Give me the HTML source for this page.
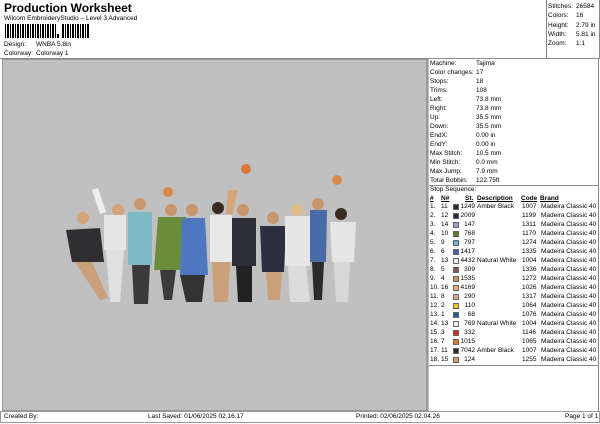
<!DOCTYPE html>
<html><head><meta charset="utf-8"><style>
*{margin:0;padding:0;box-sizing:border-box}
body{width:600px;height:424px;background:#fff;font-family:"Liberation Sans",Arial,sans-serif;font-size:6.5px;color:#000;position:relative;overflow:hidden}
.a{position:absolute;white-space:nowrap}
.t{line-height:9px}
.sw{position:absolute;width:6px;height:6px;border:1px solid #666}
</style></head><body>
<div class="a" style="left:4px;top:1px;font-size:12px;font-weight:bold">Production Worksheet</div>
<div class="a" style="left:4px;top:15px;font-size:6.5px">Wilcom EmbroideryStudio – Level 3 Advanced</div>
<div class="a" style="left:5px;top:24px;width:51px;height:14px;background:repeating-linear-gradient(90deg,#000 0 1px,#fff 1px 2px,#000 2px 4px,#fff 4px 5px)"></div>
<div class="a" style="left:57px;top:34px;width:2px;height:4px;background:#000"></div>
<div class="a" style="left:62px;top:24px;width:27px;height:14px;background:repeating-linear-gradient(90deg,#000 0 2px,#fff 2px 3px,#000 3px 4px,#fff 4px 5px)"></div>
<div class="a" style="left:4px;top:41px">Design:</div><div class="a" style="left:36px;top:41px">WNBA 5,8in</div>
<div class="a" style="left:4px;top:50px">Colorway:</div><div class="a" style="left:36px;top:50px">Colorway 1</div>

<div class="a" style="left:546px;top:0;width:54px;height:59px;border-left:1px solid #888;border-right:1px solid #888"></div>
<div class="a t" style="left:548px;top:2px;line-height:9.3px">Stitches:<br>Colors:<br>Height:<br>Width:<br>Zoom:</div>
<div class="a t" style="left:576px;top:2px;line-height:9.3px">26584<br>16<br>2.79 in<br>5.81 in<br>1:1</div>
<div class="a" style="left:0;top:58px;width:600px;height:1px;background:#888"></div>

<div class="a" style="left:2px;top:59px;width:425px;height:352px;background:#c0c0c0;border:1px solid #999"></div>
<svg class="a" style="left:0;top:0" width="600" height="424">
<g>
<circle cx="246" cy="169" r="5" fill="#d9773a"/>
<circle cx="168" cy="192" r="5" fill="#d98a4a"/>
<circle cx="337" cy="180" r="5" fill="#d9894a"/>
<circle cx="290" cy="249" r="5" fill="#d47a3a"/>
<circle cx="83" cy="218" r="6" fill="#d4a47a"/><path d="M66 230 L100 228 L104 262 L72 262Z" fill="#2e2e33"/><path d="M75 262 L92 262 L108 298 L100 300Z" fill="#caa07a"/>
<circle cx="118" cy="210" r="6" fill="#d4a47a"/><path d="M92 190 L98 188 L106 212 L100 214Z" fill="#eee"/><path d="M104 215 L126 215 L126 250 L104 250Z" fill="#e6e6e6"/><path d="M106 250 L124 250 L120 302 L110 302Z" fill="#e0e0e0"/>
<circle cx="140" cy="204" r="6" fill="#c8966c"/><path d="M128 212 L152 212 L152 265 L128 265Z" fill="#7fbac4"/><path d="M132 265 L150 265 L148 304 L134 304Z" fill="#3a3a3a"/>
<circle cx="171" cy="210" r="6" fill="#c8966c"/><path d="M158 217 L186 217 L184 270 L154 270Z" fill="#6b8c3a"/><path d="M160 270 L176 270 L172 300 L164 300Z" fill="#3a3a3a"/>
<circle cx="192" cy="210" r="6" fill="#c8966c"/><path d="M182 218 L205 218 L208 275 L180 275Z" fill="#4d78bf"/><path d="M180 275 L205 275 L202 302 L186 302Z" fill="#333"/>
<circle cx="218" cy="208" r="6" fill="#3a2a22"/><path d="M228 190 L238 190 L232 215 L226 214Z" fill="#d4a47a"/><path d="M210 215 L232 215 L232 262 L210 262Z" fill="#e8e8e8"/><path d="M212 262 L230 262 L228 302 L214 302Z" fill="#caa07a"/>
<circle cx="243" cy="210" r="6" fill="#c8966c"/><path d="M232 218 L256 218 L256 266 L232 266Z" fill="#2d2d35"/><path d="M236 266 L252 266 L252 302 L238 302Z" fill="#222"/>
<circle cx="273" cy="218" r="6" fill="#c8966c"/><path d="M260 226 L286 226 L284 272 L262 272Z" fill="#2b3040"/><path d="M266 272 L282 272 L280 300 L268 300Z" fill="#caa07a"/>
<circle cx="297" cy="210" r="6" fill="#e0bc88"/><path d="M285 216 L310 216 L310 266 L285 266Z" fill="#e6e6e6"/><path d="M288 266 L306 266 L310 302 L290 302Z" fill="#dcdcdc"/>
<circle cx="318" cy="204" r="6" fill="#c8966c"/><path d="M310 210 L327 210 L326 262 L310 262Z" fill="#4a6aa8"/><path d="M312 262 L324 262 L322 300 L314 300Z" fill="#2a2a2a"/>
<circle cx="341" cy="214" r="6" fill="#3a2a22"/><path d="M330 222 L356 222 L354 262 L332 262Z" fill="#e6e6e6"/><path d="M334 262 L350 262 L348 302 L336 302Z" fill="#d8d8d8"/>
</g>
</svg>

<div class="a" style="left:427px;top:59px;width:2px;height:352px;background:#c0c0c0;border-left:1px solid #999"></div>
<div class="a" style="left:598px;top:59px;width:1px;height:352px;background:#888"></div>
<div class="a t" style="left:430px;top:59px">Machine:<br>Color changes:<br>Stops:<br>Trims:<br>Left:<br>Right:<br>Up:<br>Down:<br>EndX:<br>EndY:<br>Max Stitch:<br>Min Stitch:<br>Max Jump:<br>Total Bobbin:</div>
<div class="a t" style="left:476px;top:59px">Tajima<br>17<br>18<br>108<br>73.8 mm<br>73.8 mm<br>35.5 mm<br>35.5 mm<br>0.00 in<br>0.00 in<br>10.5 mm<br>0.0 mm<br>7.9 mm<br>122.75ft</div>
<div class="a" style="left:429px;top:185px;width:170px;height:1px;background:#888"></div>
<div class="a" style="left:430px;top:186px">Stop Sequence:</div>
<div class="a" style="left:430px;top:195px;font-weight:bold;text-decoration:underline">#</div>
<div class="a" style="left:441px;top:195px;font-weight:bold;text-decoration:underline">N#</div>
<div class="a" style="left:465px;top:195px;font-weight:bold;text-decoration:underline">St.</div>
<div class="a" style="left:477px;top:195px;font-weight:bold;text-decoration:underline">Description</div>
<div class="a" style="left:521px;top:195px;font-weight:bold;text-decoration:underline">Code</div>
<div class="a" style="left:540px;top:195px;font-weight:bold;text-decoration:underline">Brand</div>
<div id="rows"></div>
<div class="a" style="left:429px;top:365px;width:170px;height:1px;background:#888"></div>

<div class="a" style="left:0;top:411px;width:600px;height:12px;border:1px solid #999"></div>
<div class="a" style="left:4px;top:413px">Created By:</div>
<div class="a" style="left:148px;top:413px">Last Saved: 01/06/2025 02.16.17</div>
<div class="a" style="left:356px;top:413px">Printed: 02/06/2025 02.04.26</div>
<div class="a" style="left:565px;top:413px">Page 1 of 1</div>
<script>
var d=[[11,'#2a2a2a',1249,'Amber Black',1007],[12,'#2b2b33',2009,'',1199],[14,'#a39ad0',147,'',1311],[10,'#5e7a2e',768,'',1170],[9,'#6fb0d6',797,'',1274],[6,'#3f5fb8',1417,'',1335],[13,'#eeeeee',4432,'Natural White',1004],[5,'#6e5a50',309,'',1336],[4,'#c8926a',1535,'',1272],[16,'#f0a878',4169,'',1026],[8,'#e8a0a0',290,'',1317],[2,'#f2c020',110,'',1064],[1,'#1e5aa0',68,'',1076],[13,'#eeeeee',769,'Natural White',1004],[3,'#d82020',332,'',1146],[7,'#e07a20',1015,'',1065],[11,'#2a2a2a',7042,'Amber Black',1007],[15,'#c8a080',124,'',1255]];
var h='';d.forEach(function(r,i){var y=203+i*9;
h+='<div class="a" style="left:430px;top:'+y+'px">'+(i+1)+'.</div><div class="a" style="left:441px;top:'+y+'px">'+r[0]+'</div><div class="sw" style="left:453px;top:'+(y+1)+'px;background:'+r[1]+'"></div><div class="a" style="left:460px;top:'+y+'px;width:15px;text-align:right">'+r[2]+'</div><div class="a" style="left:477px;top:'+y+'px">'+r[3]+'</div><div class="a" style="left:522px;top:'+y+'px">'+r[4]+'</div><div class="a" style="left:541px;top:'+y+'px">Madeira Classic 40</div>';});
document.getElementById('rows').innerHTML=h;
</script>
</body></html>
